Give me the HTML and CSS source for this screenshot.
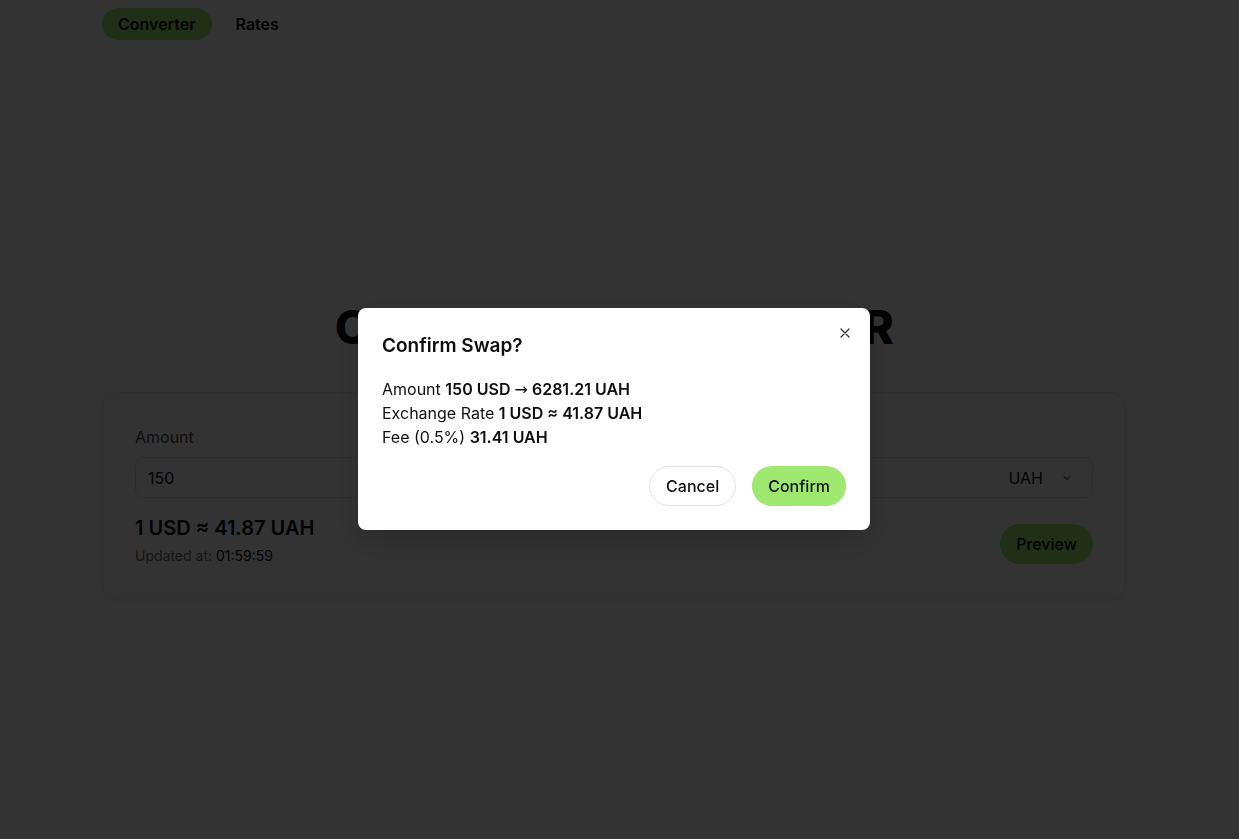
FILE: index.html
```html
<!DOCTYPE html>
<html lang="en">
<head>
<meta charset="utf-8">
<title>Currency Converter</title>
<link rel="stylesheet" href="styles.css">
</head>
<body>
<div class="page">
  <div class="container">
    <nav class="nav">
      <a class="tab active">Converter</a>
      <a class="tab">Rates</a>
    </nav>
    <h1 class="title">CURRENCY CONVERTER</h1>
    <section class="card">
      <div class="fields">
        <div class="field">
          <label class="label">Amount</label>
          <div class="input">150</div>
        </div>
        <div class="field">
          <label class="label">To</label>
          <div class="input select">
            <span>UAH</span>
            <svg class="chev" width="12" height="12" viewBox="0 0 12 12"><path d="M3 4.5 6 7.5 9 4.5" fill="none" stroke="currentColor" stroke-width="1.2" stroke-linecap="round" stroke-linejoin="round"/></svg>
          </div>
        </div>
      </div>
      <div class="result">
        <div>
          <div class="rate">1 USD ≈ 41.87 UAH</div>
          <div class="updated">Updated at: <span class="time">01:59:59</span></div>
        </div>
        <button class="btn primary">Preview</button>
      </div>
    </section>
  </div>
</div>
<div class="overlay"></div>
<div class="modal">
  <button class="close" aria-label="Close">
    <svg width="16" height="16" viewBox="0 0 16 16"><path d="M4 4 12 12M12 4 4 12" fill="none" stroke="currentColor" stroke-width="1.3" stroke-linecap="round"/></svg>
  </button>
  <h2 class="modal-title">Confirm Swap?</h2>
  <div class="details">
    <div class="line">Amount <b>150 USD <span class="arrow">→</span> 6281.21 UAH</b></div>
    <div class="line">Exchange Rate <b>1 USD ≈ 41.87 UAH</b></div>
    <div class="line">Fee (0.5%) <b>31.41 UAH</b></div>
  </div>
  <div class="actions">
    <button class="btn outline">Cancel</button>
    <button class="btn primary">Confirm</button>
  </div>
</div>
</body>
</html>
```
FILE: styles.css
```css
* { box-sizing: border-box; }
html, body { margin: 0; padding: 0; }
body {
  font-family: Inter, "Noto Sans", sans-serif;
  color: #0e0f0c;
  background: #fff;
  width: 1239px;
  height: 839px;
  overflow: hidden;
}
.page { width: 1228px; }
.container {
  width: 1024px;
  margin: 0 auto;
  padding-top: 8px;
}
.nav { display: flex; gap: 8px; }
.tab {
  display: inline-flex;
  align-items: center;
  height: 32px;
  padding: 0 16px;
  border-radius: 16px;
  font-size: 16px;
  font-weight: 600;
  color: #0e0f0c;
}
.tab.active { background: #9fe870; }
.title {
  margin: 263px 0 41px;
  text-align: center;
  font-size: 46.7px;
  line-height: 48px;
  font-weight: 800;
  letter-spacing: -0.5px;
}
.card {
  border: 1px solid #e8e8e8;
  border-radius: 16px;
  padding: 32px;
  box-shadow: 0 2px 6px rgba(0,0,0,0.06);
}
.fields { display: grid; grid-template-columns: 1fr 1fr; gap: 16px; }
.field { display: flex; flex-direction: column; gap: 8px; }
.label { font-size: 16px; line-height: 24px; color: #454745; }
.input {
  height: 41px;
  border: 1px solid #e2e2e2;
  border-radius: 8px;
  padding: 0 12px;
  display: flex;
  align-items: center;
  font-size: 16px;
  color: #0e0f0c;
}
.select { justify-content: flex-end; gap: 18px; padding-right: 19px; }
.chev { color: #6a6c6a; }
.result {
  margin-top: 16px;
  display: flex;
  justify-content: space-between;
  align-items: center;
}
.rate { font-size: 20px; line-height: 28px; font-weight: 600; }
.updated { margin-top: 4px; font-size: 14px; line-height: 20px; color: #6a6c6a; }
.time { color: #0e0f0c; }
.btn {
  font-family: inherit;
  font-size: 16px;
  font-weight: 500;
  height: 40px;
  padding: 0 15px;
  border-radius: 20px;
  border: 1px solid transparent;
  color: #0e0f0c;
  cursor: pointer;
}
.btn.primary { background: #9fe870; margin-top: 8px; }
.btn.outline { background: #fff; border-color: #e2e2e2; padding: 0 16px; }
.overlay {
  position: fixed;
  inset: 0;
  background: rgba(0,0,0,0.8);
}
.modal {
  position: fixed;
  left: 358px;
  top: 308px;
  width: 512px;
  background: #fff;
  border-radius: 8px;
  padding: 24px;
  box-shadow: 0 10px 30px rgba(0,0,0,0.2);
}
.close {
  position: absolute;
  top: 17px;
  right: 17px;
  width: 16px;
  height: 16px;
  padding: 0;
  border: 0;
  background: none;
  color: #333;
  display: flex;
}
.modal-title {
  margin: 0;
  font-size: 19px;
  line-height: 28px;
  font-weight: 600;
}
.details {
  margin-top: 17px;
  font-size: 16px;
}
.line { height: 24px; line-height: 24px; overflow: visible; }
.details b { font-weight: 600; }
.arrow { font-family: "DejaVu Sans", sans-serif; font-weight: 400; font-size: 16px; line-height: 0; }
.actions {
  margin-top: 17px;
  display: flex;
  justify-content: flex-end;
  gap: 16px;
}
.actions .btn.primary { margin-top: 0; }
```
